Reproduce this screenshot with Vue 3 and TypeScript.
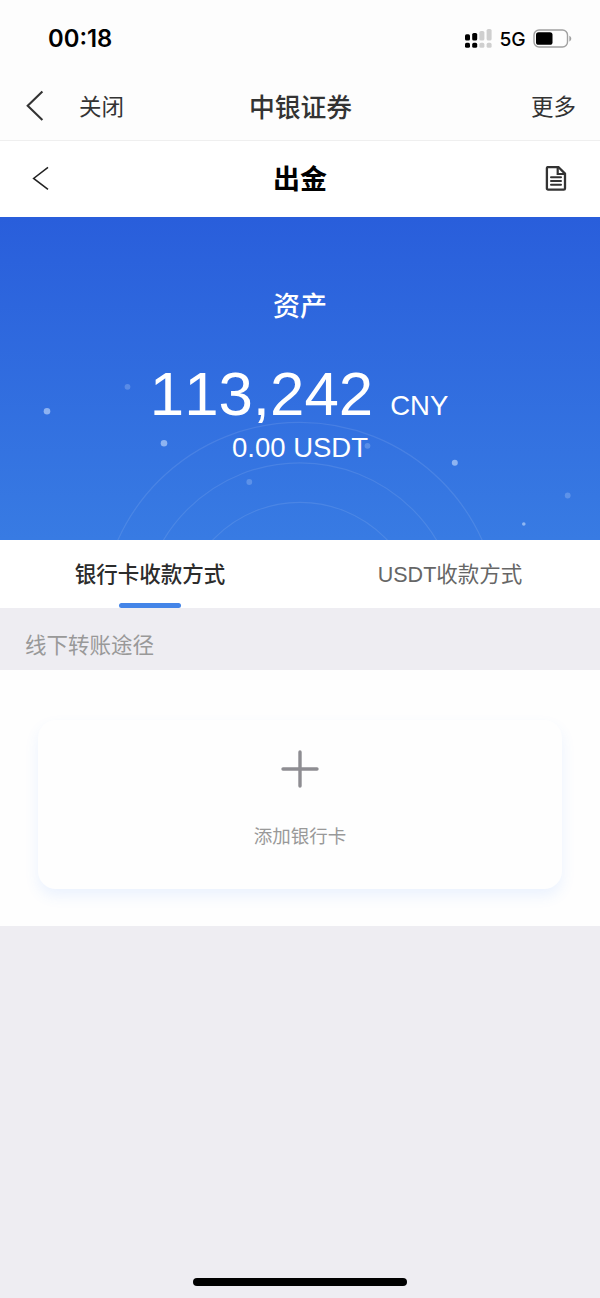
<script setup lang="ts">
import { ref } from 'vue'

interface Dot { x: number; y: number; r: number; o: number }

const tabs: string[] = ['银行卡收款方式', 'USDT收款方式']
const active = ref(0)
const rings: number[] = [199.7, 159.2, 119.7]
const dots: Dot[] = [
  { x: 47, y: 194.3, r: 3.3, o: 0.55 },
  { x: 127.5, y: 169.8, r: 2.9, o: 0.24 },
  { x: 164, y: 226.3, r: 3.3, o: 0.55 },
  { x: 249.3, y: 265, r: 2.9, o: 0.24 },
  { x: 367.5, y: 228.8, r: 2.9, o: 0.24 },
  { x: 454.8, y: 245.8, r: 3, o: 0.55 },
  { x: 567.7, y: 278.5, r: 2.9, o: 0.24 },
  { x: 523.8, y: 307, r: 1.8, o: 0.55 },
]
</script>

<template>
  <div class="page">
    <header class="status">
      <span class="time">00:18</span>
      <div class="indicators">
        <svg class="signal" width="28" height="20" viewBox="0 0 28 20">
          <g fill="#000">
            <rect x="0" y="5.3" width="5" height="6.2" rx="1.6" />
            <rect x="7.2" y="4" width="5" height="7.5" rx="1.6" />
            <rect x="0" y="13.8" width="5" height="5" rx="1.6" />
            <rect x="7.2" y="13.8" width="5" height="5" rx="1.6" />
          </g>
          <g fill="#cfcfcf">
            <rect x="14.4" y="2" width="5" height="9.5" rx="1.6" />
            <rect x="21.6" y="0" width="5" height="11.5" rx="1.6" />
            <rect x="14.4" y="13.8" width="5" height="5" rx="1.6" />
            <rect x="21.6" y="13.8" width="5" height="5" rx="1.6" />
          </g>
        </svg>
        <span class="network">5G</span>
        <svg class="battery" width="40" height="20" viewBox="0 0 40 20">
          <rect x="1" y="1" width="33.5" height="17" rx="5" fill="none" stroke="#a0a0a0" stroke-width="1.4" />
          <rect x="3" y="3.2" width="16.5" height="12.6" rx="2.6" fill="#000" />
          <path d="M36.3 6.7c2.6 1 2.6 4.7 0 5.7z" fill="#a0a0a0" />
        </svg>
      </div>
    </header>

    <nav class="host-bar">
      <div class="left">
        <svg width="20" height="32" viewBox="0 0 20 32">
          <path d="M17.4 1.4 2.7 15.8 17.4 30" fill="none" stroke="#333" stroke-width="2.1" />
        </svg>
        <span class="close">关闭</span>
      </div>
      <span class="host-title">中银证券</span>
      <span class="more">更多</span>
    </nav>

    <nav class="app-bar">
      <svg class="back" width="18" height="26" viewBox="0 0 18 26">
        <path d="M16 1.4 1.6 12.4 16 23.4" fill="none" stroke="#222" stroke-width="1.5" />
      </svg>
      <h1>出金</h1>
      <svg class="doc" width="22" height="26" viewBox="0 0 22 26">
        <path d="M3.1 1H13.4L20 7.6V22.4a1.2 1.2 0 0 1-1.2 1.2H3.1A1.2 1.2 0 0 1 1.9 22.4V2.2A1.2 1.2 0 0 1 3.1 1Z" fill="none" stroke="#333" stroke-width="2.3" stroke-linejoin="round" />
        <path d="M12.7 1.3V8H19.6" fill="none" stroke="#333" stroke-width="2.2" />
        <path d="M6 11.2H16M6 14.9H16M6 18.7H16" stroke="#333" stroke-width="2" stroke-linecap="round" />
      </svg>
    </nav>

    <section class="hero">
      <svg class="sky" width="600" height="323" viewBox="0 0 600 323">
        <circle v-for="r in rings" :key="r" cx="300" cy="405" :r="r" fill="none" stroke="#fff" stroke-opacity="0.1" stroke-width="1.2" />
        <circle v-for="d in dots" :key="d.x" :cx="d.x" :cy="d.y" :r="d.r" fill="#d8e9ff" :fill-opacity="d.o" />
      </svg>
      <div class="caption">资产</div>
      <div class="amount"><span class="value">113,242</span><span class="unit">CNY</span></div>
      <div class="usdt">0.00 USDT</div>
    </section>

    <div class="tabs">
      <button v-for="(tab, i) in tabs" :key="tab" class="tab" :class="{ active: active === i }" @click="active = i">{{ tab }}</button>
    </div>

    <div class="section-label">线下转账途径</div>

    <main class="panel">
      <div class="card">
        <svg width="38" height="38" viewBox="0 0 38 38">
          <path d="M19 2V36M2 19H36" stroke="#8e8d92" stroke-width="3.4" stroke-linecap="round" />
        </svg>
        <span>添加银行卡</span>
      </div>
    </main>

    <footer class="bottom"><div class="home"></div></footer>
  </div>
</template>

<style>
body { margin: 0; background: #eeedf2; }
</style>

<style scoped>
.page {
  width: 600px;
  height: 1298px;
  display: flex;
  flex-direction: column;
  overflow: hidden;
  background: #eeedf2;
  font-family: "Liberation Sans", "Noto Sans CJK SC", sans-serif;
  color: #333;
}
.status {
  height: 72px;
  flex: none;
  box-sizing: border-box;
  padding: 0 28px 0 48px;
  display: flex;
  justify-content: space-between;
  background: #fdfdfd;
  color: #000;
  font-family: Inter, sans-serif;
}
.time { font-size: 23.8px; font-weight: 600; line-height: 78px; }
.indicators { display: flex; align-items: flex-start; }
.signal { margin-top: 29px; }
.network { margin-left: 7px; font-size: 19.2px; font-weight: 500; line-height: 78px; width: 26px; letter-spacing: -0.2px; }
.battery { margin: 28.5px -1px 0 7.5px; }
.host-bar {
  height: 69px;
  flex: none;
  box-sizing: border-box;
  border-bottom: 1px solid #efefef;
  padding: 0 24px 0 25px;
  display: grid;
  grid-template-columns: 1fr auto 1fr;
  align-items: center;
  background: #fdfdfd;
  line-height: 34px;
}
.left { display: flex; align-items: center; gap: 34px; }
.close, .more { font-size: 22.5px; padding-top: 4px; }
.more { text-align: right; }
.host-title { font-size: 25.8px; font-weight: 500; padding-top: 3px; }
.app-bar {
  height: 76px;
  flex: none;
  box-sizing: border-box;
  padding: 0 33px 0 32px;
  display: grid;
  grid-template-columns: 1fr auto 1fr;
  align-items: center;
  background: #fff;
}
.app-bar h1 { margin: 0; padding: 2px 0 0 1px; font-size: 27px; line-height: 40px; font-weight: 700; color: #000; }
.doc { justify-self: end; }
.hero {
  position: relative;
  height: 323px;
  flex: none;
  box-sizing: border-box;
  padding-top: 70px;
  background: linear-gradient(#295edb, #387be3);
  color: #fff;
  text-align: center;
}
.sky { position: absolute; top: 0; left: 0; }
.caption, .amount, .usdt { position: relative; }
.caption { font-size: 27px; font-weight: 500; line-height: 40px; }
.amount {
  height: 72px;
  margin-top: 31px;
  padding-right: 2px;
  display: flex;
  justify-content: center;
  align-items: baseline;
  gap: 17px;
  line-height: 72px;
  font-kerning: none;
}
.value { font-size: 61.8px; }
.unit { font-size: 27.5px; }
.usdt { padding-top: 1px; font-size: 27.5px; line-height: 34px; font-kerning: none; }
.tabs { height: 68px; flex: none; display: flex; background: #fff; }
.tab {
  position: relative;
  flex: 1;
  border: 0;
  padding: 2px 0 0;
  background: none;
  font: 400 21.5px/66px "Liberation Sans", "Noto Sans CJK SC", sans-serif;
  color: #666;
}
.tab.active { color: #2c2c2c; font-weight: 500; }
.tab.active::after {
  content: "";
  position: absolute;
  left: 50%;
  bottom: 0;
  width: 62px;
  height: 5px;
  margin-left: -31px;
  border-radius: 2.5px;
  background: #4485e8;
}
.section-label {
  height: 62px;
  flex: none;
  box-sizing: border-box;
  padding: 7px 25px 0;
  font-size: 21.5px;
  line-height: 62px;
  color: #999;
}
.panel { height: 256px; flex: none; box-sizing: border-box; padding: 50px 38px 37px; background: #fefefe; }
.card {
  height: 169px;
  box-sizing: border-box;
  padding-top: 30px;
  display: flex;
  flex-direction: column;
  align-items: center;
  gap: 35px;
  border-radius: 18px;
  background: #fefefe;
  box-shadow: 0 7px 14px rgba(68, 133, 255, 0.1);
  font-size: 18.5px;
  line-height: 28px;
  color: #999;
}
.bottom { flex: 1; display: flex; align-items: flex-end; justify-content: center; padding-bottom: 12px; }
.home { width: 214px; height: 8px; border-radius: 4px; background: #000; }
</style>
